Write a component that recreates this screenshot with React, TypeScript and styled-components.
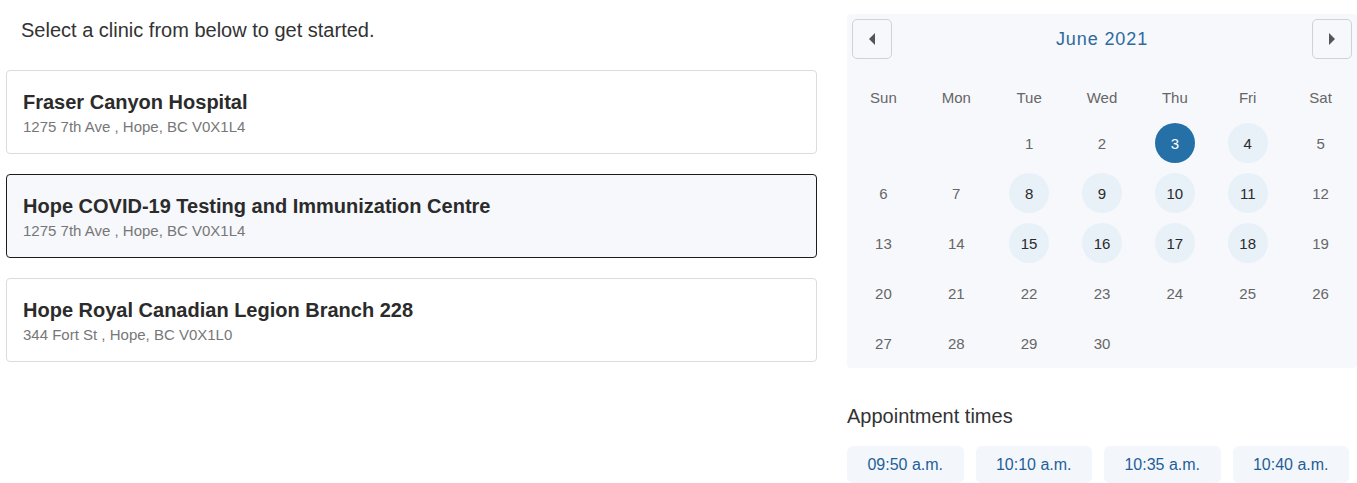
import React from 'react'
import styled, { createGlobalStyle } from 'styled-components'

const GlobalStyle = createGlobalStyle`
  body {
    margin: 0;
    background: #fff;
    font-family: "Liberation Sans", Arial, sans-serif;
    color: #333;
  }
`

const Page = styled.main`
  display: grid;
  grid-template-columns: 811px 1fr;
  column-gap: 30px;
  padding-left: 6px;
  width: 1357px;
  box-sizing: border-box;
`

const LeftColumn = styled.section`
  padding-top: 18px;
`

const Intro = styled.p`
  margin: 0 0 28px 15px;
  font-size: 20px;
  line-height: 24px;
  color: #333;
`

const ClinicList = styled.div`
  display: flex;
  flex-direction: column;
  gap: 20px;
`

const ClinicCard = styled.div<{ $selected?: boolean }>`
  border: 1px solid ${p => (p.$selected ? '#1c1c1c' : '#dcdcdc')};
  background: ${p => (p.$selected ? '#f6f8fc' : '#fff')};
  border-radius: 4px;
  padding: 16px 16px;
  cursor: pointer;
`

const ClinicName = styled.h3`
  margin: 0;
  font-size: 20px;
  line-height: 30px;
  font-weight: bold;
  color: #2b2b2b;
`

const ClinicAddress = styled.p`
  margin: 0;
  font-size: 15px;
  line-height: 20px;
  color: #777;
`

const RightColumn = styled.section`
  padding-top: 14px;
`

const Calendar = styled.div`
  background: #f7f8fc;
  border-radius: 4px;
`

const CalendarNav = styled.div`
  display: flex;
  align-items: center;
  justify-content: space-between;
  padding: 5px;
  margin-bottom: 13px;
`

const NavButton = styled.button`
  width: 40px;
  height: 40px;
  border: 1px solid #d2d2d6;
  border-radius: 5px;
  background: transparent;
  display: flex;
  align-items: center;
  justify-content: center;
  padding: 0;
  cursor: pointer;
`

const MonthTitle = styled.span`
  font-size: 18px;
  letter-spacing: 0.9px;
  color: #2d6a9e;
`

const Grid = styled.div`
  display: grid;
  grid-template-columns: repeat(7, 1fr);
`

const WeekDay = styled.div`
  height: 41px;
  display: flex;
  align-items: center;
  justify-content: center;
  font-size: 15px;
  color: #666;
`

const DayCell = styled.div`
  height: 50px;
  display: flex;
  align-items: center;
  justify-content: center;
`

const Day = styled.span<{ $state: 'none' | 'open' | 'selected' }>`
  width: 40px;
  height: 40px;
  border-radius: 50%;
  display: flex;
  align-items: center;
  justify-content: center;
  font-size: 15px;
  color: ${p => (p.$state === 'selected' ? '#fff' : p.$state === 'open' ? '#2a2a2a' : '#666')};
  background: ${p => (p.$state === 'selected' ? '#2571a7' : p.$state === 'open' ? '#e8f0f8' : 'transparent')};
  cursor: ${p => (p.$state === 'none' ? 'default' : 'pointer')};
`

const TimesTitle = styled.h4`
  margin: 36px 0 18px;
  font-size: 20px;
  line-height: 24px;
  font-weight: normal;
  color: #333;
`

const Times = styled.div`
  display: grid;
  grid-template-columns: repeat(4, 1fr);
  gap: 12px;
  width: 502px;
`

const TimeButton = styled.button`
  height: 37px;
  border: none;
  border-radius: 6px;
  background: #f3f6fb;
  color: #1f5f98;
  font-family: "Liberation Sans", Arial, sans-serif;
  font-size: 16px;
  cursor: pointer;
`

const Arrow = ({ dir }: { dir: 'left' | 'right' }) => (
  <svg width="10" height="14" viewBox="0 0 10 14">
    {dir === 'left' ? (
      <path d="M8 1 L2 7 L8 13 Z" fill="#555" />
    ) : (
      <path d="M2 1 L8 7 L2 13 Z" fill="#555" />
    )}
  </svg>
)

const clinics = [
  { name: 'Fraser Canyon Hospital', address: '1275 7th Ave , Hope, BC V0X1L4' },
  { name: 'Hope COVID-19 Testing and Immunization Centre', address: '1275 7th Ave , Hope, BC V0X1L4', selected: true },
  { name: 'Hope Royal Canadian Legion Branch 228', address: '344 Fort St , Hope, BC V0X1L0' },
]

const weekDays = ['Sun', 'Mon', 'Tue', 'Wed', 'Thu', 'Fri', 'Sat']
const openDays = [4, 8, 9, 10, 11, 15, 16, 17, 18]
const selectedDay = 3
const times = ['09:50 a.m.', '10:10 a.m.', '10:35 a.m.', '10:40 a.m.']

export default function App() {
  const cells: (number | null)[] = [null, null]
  for (let d = 1; d <= 30; d++) cells.push(d)

  return (
    <>
      <GlobalStyle />
      <Page>
        <LeftColumn>
          <Intro>Select a clinic from below to get started.</Intro>
          <ClinicList>
            {clinics.map(c => (
              <ClinicCard key={c.name} $selected={c.selected}>
                <ClinicName>{c.name}</ClinicName>
                <ClinicAddress>{c.address}</ClinicAddress>
              </ClinicCard>
            ))}
          </ClinicList>
        </LeftColumn>
        <RightColumn>
          <Calendar>
            <CalendarNav>
              <NavButton aria-label="Previous month"><Arrow dir="left" /></NavButton>
              <MonthTitle>June 2021</MonthTitle>
              <NavButton aria-label="Next month"><Arrow dir="right" /></NavButton>
            </CalendarNav>
            <Grid>
              {weekDays.map(w => <WeekDay key={w}>{w}</WeekDay>)}
              {cells.map((d, i) => (
                <DayCell key={i}>
                  {d && (
                    <Day $state={d === selectedDay ? 'selected' : openDays.includes(d) ? 'open' : 'none'}>
                      {d}
                    </Day>
                  )}
                </DayCell>
              ))}
            </Grid>
          </Calendar>
          <TimesTitle>Appointment times</TimesTitle>
          <Times>
            {times.map(t => <TimeButton key={t}>{t}</TimeButton>)}
          </Times>
        </RightColumn>
      </Page>
    </>
  )
}
